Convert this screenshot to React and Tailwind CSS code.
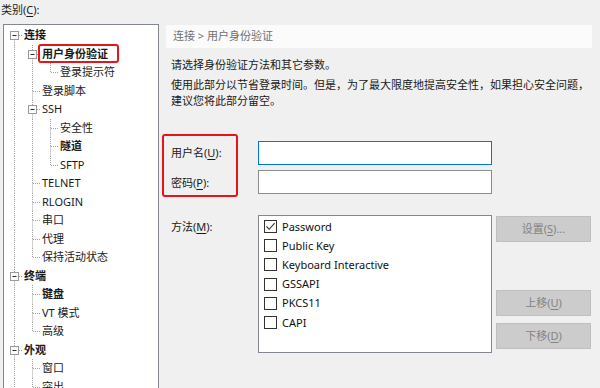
import React from 'react';

const tree = [
  {
    t: '连接', b: true, c: [
      { t: '用户身份验证', b: true, mark: true, c: [{ t: '登录提示符' }] },
      { t: '登录脚本' },
      { t: 'SSH', c: [{ t: '安全性' }, { t: '隧道', b: true }, { t: 'SFTP' }] },
      { t: 'TELNET' },
      { t: 'RLOGIN' },
      { t: '串口' },
      { t: '代理' },
      { t: '保持活动状态' },
    ],
  },
  { t: '终端', b: true, c: [{ t: '键盘', b: true }, { t: 'VT 模式' }, { t: '高级' }] },
  { t: '外观', b: true, c: [{ t: '窗口' }, { t: '突出' }] },
  { t: '高级', b: true, c: [] },
];

// flatten the nested tree into rows, keeping which ancestor lines continue
const flatten = (nodes, level = 0, conts = []) => {
  const rows = [];
  nodes.forEach((n, i) => {
    const last = i === nodes.length - 1;
    rows.push({ ...n, level, conts, last, first: level === 0 && i === 0 });
    if (n.c && n.c.length) rows.push(...flatten(n.c, level + 1, [...conts, !last]));
  });
  return rows;
};

const Line = ({ x1, y1, x2, y2 }) => (
  <line x1={x1} y1={y1} x2={x2} y2={y2} stroke="#a0a0a0" strokeWidth="1" strokeDasharray="1 1" />
);

const Cell = ({ row }) => (
  <svg width="18" height="18.5" viewBox="0 0 18 18.5" className="shrink-0">
    {!row.first && <Line x1="9.5" y1="0" x2="9.5" y2="9.5" />}
    {!row.last && <Line x1="9.5" y1="9.5" x2="9.5" y2="18.5" />}
    <Line x1="10" y1="9.5" x2="18" y2="9.5" />
    {row.c && (
      <g>
        <rect x="5.5" y="5.5" width="8" height="8" fill="#fbfbfb" stroke="#9a9a9a" />
        <line x1="7.5" y1="9.5" x2="11.5" y2="9.5" stroke="#2b2b2b" />
      </g>
    )}
  </svg>
);

const Mn = ({ children }) => <span className="underline underline-offset-2">{children}</span>;

const Check = ({ on }) => (
  <span className="w-[13px] h-[13px] border border-[#333333] bg-white shrink-0 flex items-center justify-center">
    {on && (
      <svg width="11" height="11" viewBox="0 0 11 11">
        <path d="M1.5 5.5 L4.2 8.3 L9.6 2.2" fill="none" stroke="#333333" strokeWidth="1.1" />
      </svg>
    )}
  </span>
);

const Btn = ({ children, className = '' }) => (
  <div className={`w-[95px] h-[26px] bg-[#cccccc] border border-[#bfbfbf] text-[#838383] flex items-center justify-center ${className}`}>
    {children}
  </div>
);

export default function App() {
  const rows = flatten(tree);
  const methods = ['Password', 'Public Key', 'Keyboard Interactive', 'GSSAPI', 'PKCS11', 'CAPI'];

  return (
    <div className="w-[600px] h-[388px] overflow-hidden bg-[#f0f0f0] flex text-[11px] text-[#1a1a1a] font-['Noto_Sans','Noto_Sans_CJK_SC',sans-serif]">
      {/* category tree */}
      <div className="w-[159px] flex flex-col shrink-0">
        <div className="h-[24px] shrink-0 pt-[2px] pl-px leading-[16px]">类别(<Mn>C</Mn>):</div>
        <div className="ml-[3px] flex-1 min-h-0 overflow-hidden border border-b-0 border-[#828790] bg-white pt-px pl-px">
          {rows.map((r, i) => (
            <div key={i} className="flex h-[18.5px] items-center whitespace-nowrap">
              {r.conts.map((c, j) => (
                <svg key={j} width="18" height="18.5" viewBox="0 0 18 18.5" className="shrink-0">
                  {c && <Line x1="9.5" y1="0" x2="9.5" y2="18.5" />}
                </svg>
              ))}
              <Cell row={r} />
              <span className={`ml-px relative leading-[16px] ${r.b ? 'font-bold' : ''}`}>
                {r.t}
                {r.mark && (
                  <span className="absolute -left-[4px] -top-[2px] w-[81px] h-[19px] border-2 border-[#e5151b] rounded-[3px]" />
                )}
              </span>
            </div>
          ))}
        </div>
      </div>

      {/* settings page */}
      <div className="ml-[7px] w-[426px] pt-[25px] flex flex-col">
        <div className="h-[23px] bg-[#fbfbfb] pl-[7px] flex items-center text-[#707070]">连接 &gt; 用户身份验证</div>

        <p className="mt-[9px] pl-[5px] leading-[16px]">请选择身份验证方法和其它参数。</p>
        <p className="mt-[4px] pl-[5px] leading-[16px]">
          使用此部分以节省登录时间。但是，为了最大限度地提高安全性，如果担心安全问题，
          <br />
          建议您将此部分留空。
        </p>

        <div className="mt-[25px] flex items-start">
          <div className="-ml-[4px] w-[76px] h-[63px] border-2 border-[#e5151b] rounded-[3px] pl-[7px] pt-[9px] flex flex-col gap-[14px] leading-[16px]">
            <span>用户名(<Mn>U</Mn>):</span>
            <span>密码(<Mn>P</Mn>):</span>
          </div>
          <div className="ml-[20px] mt-[7px] flex flex-col gap-[5px]">
            <div className="w-[234px] h-[24px] bg-white border border-[#0078d7]" />
            <div className="w-[234px] h-[24px] bg-white border border-[#8c8c8c]" />
          </div>
        </div>

        <div className="mt-[18px] flex items-start">
          <span className="pl-[5px] pt-[4px] w-[92px] leading-[16px]">方法(<Mn>M</Mn>):</span>
          <div className="w-[234px] h-[138px] bg-white border border-[#828790] pt-px px-[5px]">
            {methods.map((m, i) => (
              <div key={m} className="h-[19.2px] flex items-center gap-[5px] text-[#111111]">
                <Check on={i === 0} />
                <span className="leading-[16px]">{m}</span>
              </div>
            ))}
          </div>
          <div className="ml-[4px] mt-px flex flex-col">
            <Btn>设置(<Mn>S</Mn>)...</Btn>
            <Btn className="mt-[48px]">上移(<Mn>U</Mn>)</Btn>
            <Btn className="mt-[7px]">下移(<Mn>D</Mn>)</Btn>
          </div>
        </div>
      </div>
    </div>
  );
}
